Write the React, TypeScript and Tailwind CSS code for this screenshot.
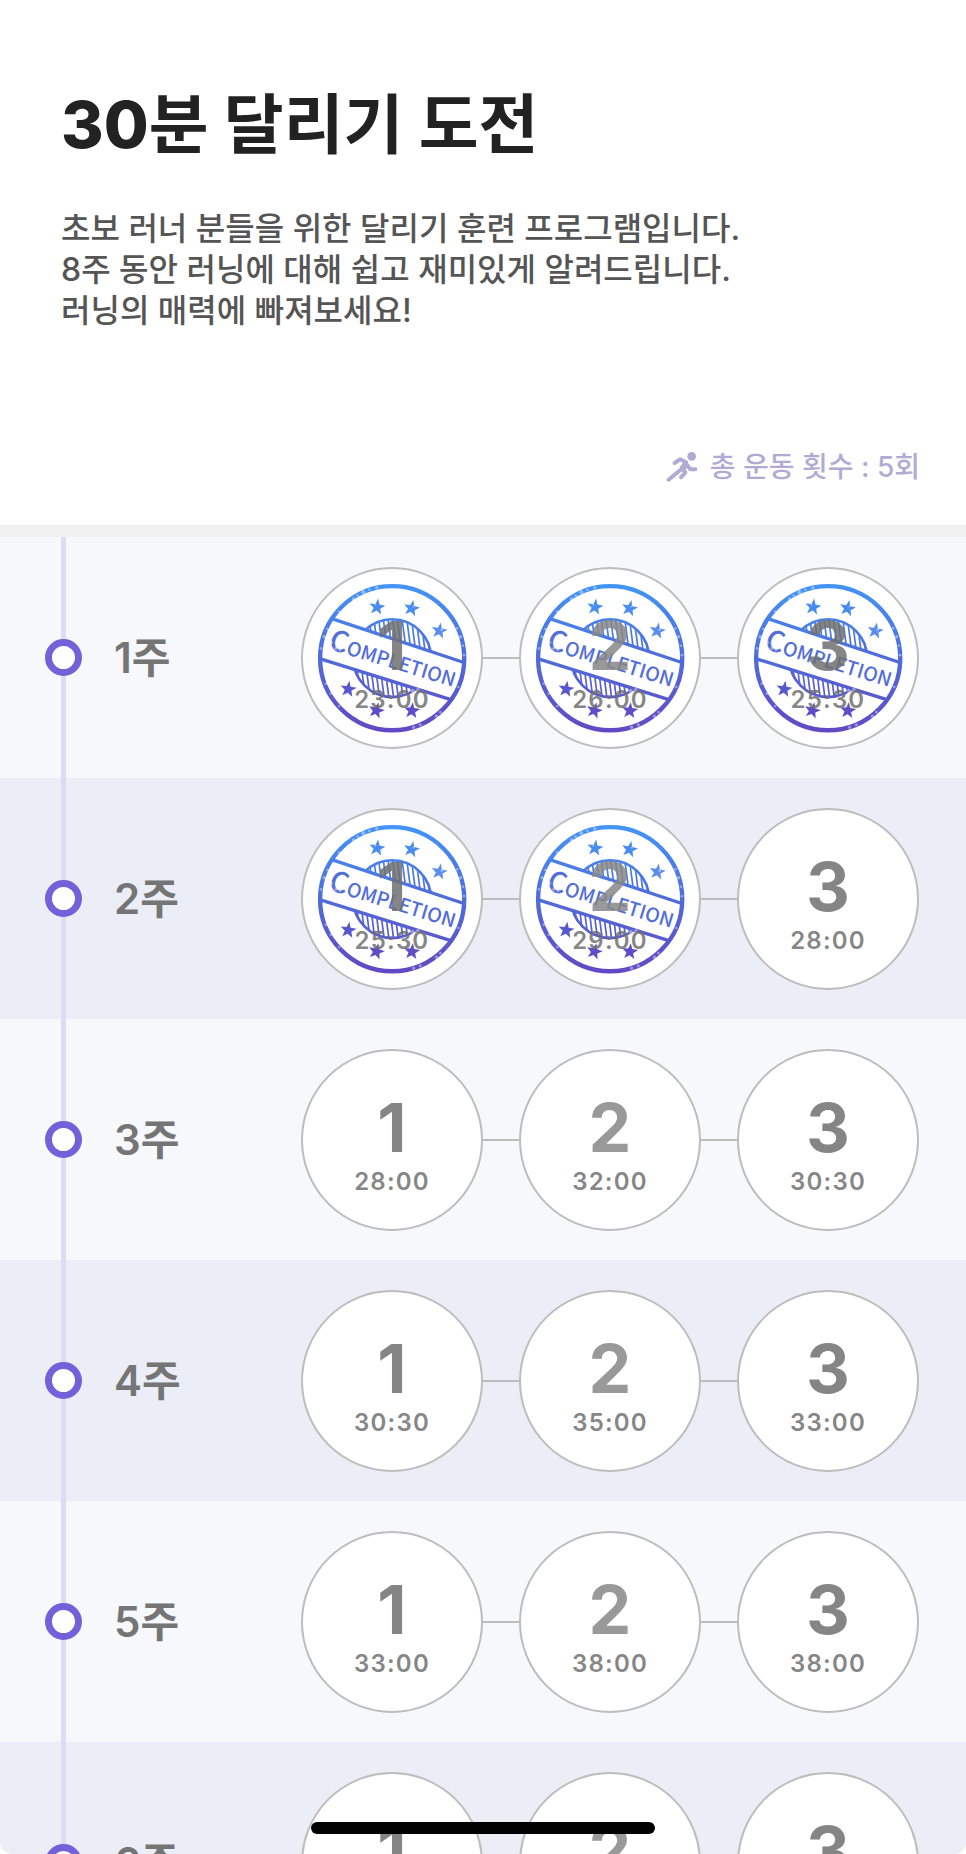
import { Fragment } from 'react'

const weeks = [
  { label: '1주', times: ['23:00', '26:00', '25:30'], done: 3 },
  { label: '2주', times: ['25:30', '29:00', '28:00'], done: 2 },
  { label: '3주', times: ['28:00', '32:00', '30:30'], done: 0 },
  { label: '4주', times: ['30:30', '35:00', '33:00'], done: 0 },
  { label: '5주', times: ['33:00', '38:00', '38:00'], done: 0 },
  { label: '6주', times: ['35:00', '40:00', '40:00'], done: 0 },
]

// translucent, so the stamp shows through the numbers
const dayColors = ['text-[#707070]/85', 'text-[#878787]/85', 'text-[#707070]/85']

const stars = [
  { x: 263, y: 156, r: 8, fill: '#3f86f0' },
  { x: 366, y: 160, r: 12, fill: '#3f86f0' },
  { x: 449, y: 227, r: 10, fill: '#5287ee' },
  { x: 177, y: 401, r: 8, fill: '#5050cc' },
  { x: 261, y: 465, r: 14, fill: '#5644c4' },
  { x: 367, y: 465, r: 6, fill: '#5644c4' },
]

// worn spots along the ink, as x, y, radius
const specks = [
  [193, 132, 5], [205, 122, 4], [222, 112, 6], [240, 105, 4], [262, 99, 5], [150, 170, 4],
  [115, 222, 4], [105, 245, 5], [96, 280, 4], [502, 220, 4], [512, 245, 5], [519, 272, 4],
  [522, 300, 4], [110, 385, 4], [125, 415, 4], [150, 452, 4], [372, 515, 5], [392, 508, 5],
  [440, 482, 5], [452, 470, 4], [505, 395, 4], [370, 408, 6], [385, 402, 5], [140, 280, 5],
  [152, 285, 4], [128, 262, 4], [310, 262, 7], [325, 266, 6], [298, 258, 5], [456, 224, 4],
  [258, 150, 3], [372, 155, 3],
]

function Stamp() {
  return (
    <svg
      viewBox="42 43 531 531"
      className="absolute inset-0 h-full w-full opacity-95"
      role="img"
      aria-label="완료"
    >
      <defs>
        <linearGradient id="ink" gradientUnits="userSpaceOnUse" x1="308" y1="88" x2="308" y2="530">
          <stop offset="0" stopColor="#3a90f8" />
          <stop offset="0.45" stopColor="#4568dc" />
          <stop offset="1" stopColor="#5a3fc0" />
        </linearGradient>
        <clipPath id="domes">
          <path d="M60 60H560V332L128 190L60 168ZM60 300L90 309L490 436L560 458V560H60Z" />
        </clipPath>
        <clipPath id="disc">
          <circle cx="308" cy="309" r="116" />
        </clipPath>
      </defs>
      <g fill="none" stroke="url(#ink)">
        <circle cx="308" cy="309" r="215" strokeWidth="13" />
        <path d="M130 192L522 322M94 311L488 434" strokeWidth="10" />
        <g clipPath="url(#domes)">
          <circle cx="308" cy="309" r="116" strokeWidth="8" />
          <g clipPath="url(#disc)">
            {Array.from({ length: 20 }, (_, i) => (
              <path key={i} d={`M${168 + i * 14} 180L${202 + i * 14} 440`} strokeWidth="5" />
            ))}
          </g>
        </g>
      </g>
      {stars.map((s) => (
        <path
          key={s.x}
          fill={s.fill}
          transform={`translate(${s.x} ${s.y}) rotate(${s.r})`}
          d="M0-25L6-8L24-7L10 4L15 21L0 11L-15 21L-10 4L-24-7L-6-8Z"
        />
      ))}
      <text
        transform="translate(115 280) rotate(17)"
        fill="#4a66d8"
        fontSize="58"
        fontWeight="500"
        className="font-['Noto_Sans_CJK_KR',sans-serif]"
      >
        <tspan fontSize="86">C</tspan>OMPLETION
      </text>
      <g fill="#fff" opacity="0.4">
        {specks.map(([x, y, r]) => (
          <circle key={`${x}-${y}`} cx={x} cy={y} r={r} />
        ))}
      </g>
    </svg>
  )
}

function Day({ day, time, done }: { day: number; time: string; done: boolean }) {
  return (
    <li className="relative flex size-[182px] shrink-0 flex-col items-center rounded-full border-2 border-[#bdbdbd] bg-white pt-9">
      {done && <Stamp />}
      <span className={`relative text-[68px] leading-20 font-bold ${dayColors[day - 1]}`}>
        {day}
      </span>
      <span className="relative text-[24px] leading-[30px] font-semibold tracking-wider text-[#707070]/85">
        {time}
      </span>
    </li>
  )
}

export default function App() {
  return (
    <main className="h-screen overflow-hidden rounded-b-xl bg-white font-['Inter','Noto_Sans_CJK_KR',sans-serif]">
      <header className="border-b-12 border-[#f0f0f0] pt-[85px] pr-[46px] pb-10 pl-[61px]">
        <h1 className="text-[65px] leading-20 font-bold text-[#222222]">
          <span className="font-extrabold">30</span>분 달리기 도전
        </h1>
        <p className="mt-[43px] text-[32px] leading-[41px] font-medium text-[#555555]">
          초보 러너 분들을 위한 달리기 훈련 프로그램입니다.
          <br />
          8주 동안 러닝에 대해 쉽고 재미있게 알려드립니다.
          <br />
          러닝의 매력에 빠져보세요!
        </p>
        <div className="mt-[118px] flex items-center justify-end gap-3 text-[#b1abd3]">
          <svg
            viewBox="0 0 96 90"
            className="w-8"
            fill="none"
            stroke="currentColor"
            strokeWidth="12"
            strokeLinecap="round"
            strokeLinejoin="round"
            aria-hidden="true"
          >
            <circle cx="77" cy="13" r="13" fill="currentColor" stroke="none" />
            <path d="M26 33L42 22L60 30L47 48L58 61L45 76" />
            <path d="M58 32L73 52H88M43 54L8 83" />
            <path d="M54 34L64 42L52 54Z" fill="currentColor" strokeWidth="6" />
          </svg>
          <p className="text-[28px] leading-9 font-medium">총 운동 횟수 : 5회</p>
        </div>
      </header>

      <ol>
        {weeks.map((week) => (
          <li
            key={week.label}
            className="relative flex h-[241px] items-center bg-[#f7f8fc] pr-[47px] pl-[45px] even:bg-[#ebeef6]"
          >
            <span className="absolute inset-y-0 left-[61px] w-[5px] bg-[#dfdbf4]" />
            <span className="relative size-[37px] rounded-full border-7 border-[#7460d8] bg-white" />
            <h2 className="ml-8 text-[42px] leading-none font-semibold text-[#757575]">
              {week.label}
            </h2>
            <ol className="ml-auto flex items-center">
              {week.times.map((time, i) => (
                <Fragment key={i}>
                  {i > 0 && <li aria-hidden="true" className="h-0.5 w-9 bg-[#bdbdbd]" />}
                  <Day day={i + 1} time={time} done={i < week.done} />
                </Fragment>
              ))}
            </ol>
          </li>
        ))}
      </ol>

      <div className="fixed bottom-5 left-1/2 h-3 w-[344px] -translate-x-1/2 rounded-full bg-black" />
    </main>
  )
}
